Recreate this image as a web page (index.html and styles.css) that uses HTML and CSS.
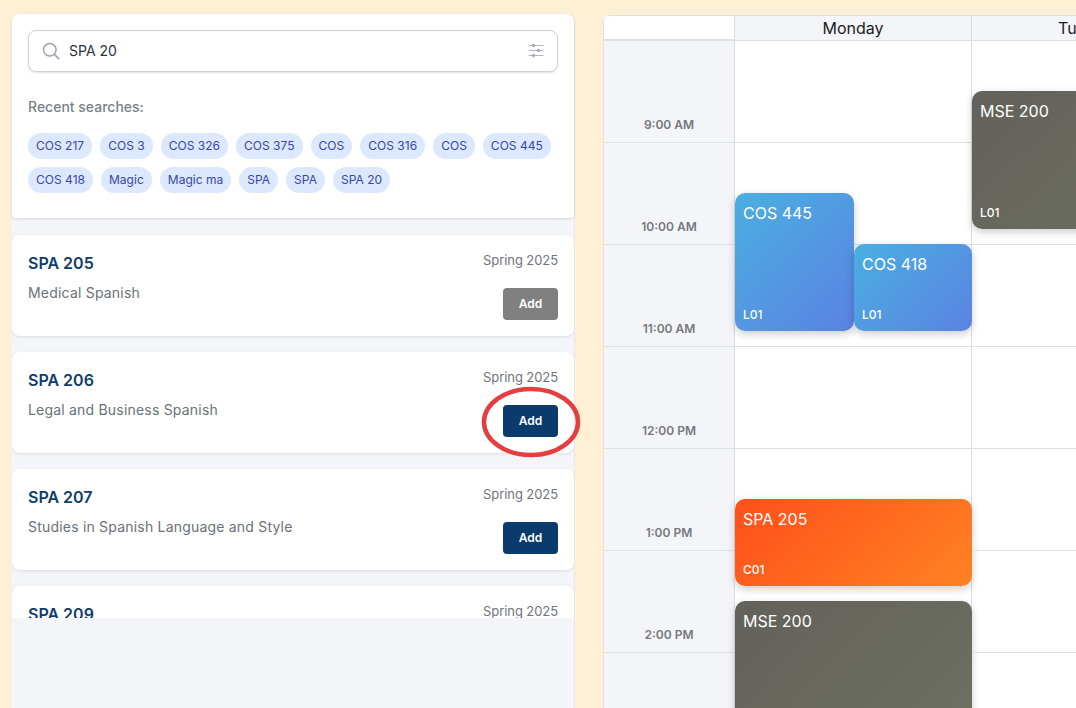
FILE: index.html
```html
<!DOCTYPE html>
<html lang="en">
<head>
    <meta charset="UTF-8">
    <title>Course Schedule</title>
    <link rel="stylesheet" href="styles.css">
</head>
<body>
    <div class="page">
        <div class="sidebar">
            <div class="search-card">
                <div class="search-box">
                    <svg class="search-icon" width="18" height="18" viewBox="0 0 18 18" fill="none" stroke="#9ca3af" stroke-width="1.5" stroke-linecap="round">
                        <circle cx="7.8" cy="7.8" r="6.3"/>
                        <path d="M12.4 12.4L16.6 16.6"/>
                    </svg>
                    <span class="search-text">SPA 20</span>
                    <svg class="filter-icon" width="16" height="16" viewBox="0 0 16 16" fill="#a9adb6" stroke="#b4b7bf">
                        <path d="M0.5 2.5H15.5M0.5 7.5H15.5M0.5 12.5H15.5" stroke-width="1.2"/>
                        <circle cx="5.5" cy="2.5" r="1.7" stroke="none"/>
                        <circle cx="10.5" cy="7.5" r="1.7" stroke="none"/>
                        <circle cx="5.5" cy="12.5" r="1.7" stroke="none"/>
                    </svg>
                </div>
                <div class="recent-label">Recent searches:</div>
                <div class="chips">
                    <span class="chip">COS 217</span>
                    <span class="chip">COS 3</span>
                    <span class="chip">COS 326</span>
                    <span class="chip">COS 375</span>
                    <span class="chip">COS</span>
                    <span class="chip">COS 316</span>
                    <span class="chip">COS</span>
                    <span class="chip">COS 445</span>
                    <span class="chip">COS 418</span>
                    <span class="chip">Magic</span>
                    <span class="chip">Magic ma</span>
                    <span class="chip">SPA</span>
                    <span class="chip">SPA</span>
                    <span class="chip">SPA 20</span>
                </div>
            </div>
            <div class="results">
                <div class="course-card">
                    <div class="course-info">
                        <div class="course-code">SPA 205</div>
                        <div class="course-title">Medical Spanish</div>
                    </div>
                    <div class="course-side">
                        <div class="course-term">Spring 2025</div>
                        <button class="add-btn added">Add</button>
                    </div>
                </div>
                <div class="course-card">
                    <div class="course-info">
                        <div class="course-code">SPA 206</div>
                        <div class="course-title">Legal and Business Spanish</div>
                    </div>
                    <div class="course-side">
                        <div class="course-term">Spring 2025</div>
                        <button class="add-btn">Add</button>
                    </div>
                </div>
                <div class="course-card">
                    <div class="course-info">
                        <div class="course-code">SPA 207</div>
                        <div class="course-title">Studies in Spanish Language and Style</div>
                    </div>
                    <div class="course-side">
                        <div class="course-term">Spring 2025</div>
                        <button class="add-btn">Add</button>
                    </div>
                </div>
                <div class="course-card">
                    <div class="course-info">
                        <div class="course-code">SPA 209</div>
                        <div class="course-title">Spanish for Heritage Speakers</div>
                    </div>
                    <div class="course-side">
                        <div class="course-term">Spring 2025</div>
                        <button class="add-btn">Add</button>
                    </div>
                </div>
            </div>
        </div>

        <div class="calendar">
            <div class="time-col">
                <div class="corner"></div>
                <div class="time-cell"><span>9:00 AM</span></div>
                <div class="time-cell"><span>10:00 AM</span></div>
                <div class="time-cell"><span>11:00 AM</span></div>
                <div class="time-cell"><span>12:00 PM</span></div>
                <div class="time-cell"><span>1:00 PM</span></div>
                <div class="time-cell"><span>2:00 PM</span></div>
                <div class="time-cell"><span>3:00 PM</span></div>
            </div>
            <div class="day-col">
                <div class="day-head">Monday</div>
                <div class="day-body">
                    <div class="hour"></div><div class="hour"></div><div class="hour"></div>
                    <div class="hour"></div><div class="hour"></div><div class="hour"></div><div class="hour"></div>
                    <div class="event blue" style="top:152px;height:138px;left:0;width:119px">
                        <div class="event-code">COS 445</div>
                        <div class="event-section">L01</div>
                    </div>
                    <div class="event blue" style="top:203px;height:87px;left:119px;width:118px">
                        <div class="event-code">COS 418</div>
                        <div class="event-section">L01</div>
                    </div>
                    <div class="event orange" style="top:458px;height:87px;left:0;width:237px">
                        <div class="event-code">SPA 205</div>
                        <div class="event-section">C01</div>
                    </div>
                    <div class="event gray" style="top:560px;height:138px;left:0;width:237px">
                        <div class="event-code">MSE 200</div>
                        <div class="event-section">L01</div>
                    </div>
                </div>
            </div>
            <div class="day-col">
                <div class="day-head">Tuesday</div>
                <div class="day-body">
                    <div class="hour"></div><div class="hour"></div><div class="hour"></div>
                    <div class="hour"></div><div class="hour"></div><div class="hour"></div><div class="hour"></div>
                    <div class="event gray" style="top:50px;height:138px;left:0;width:237px">
                        <div class="event-code">MSE 200</div>
                        <div class="event-section">L01</div>
                    </div>
                </div>
            </div>
        </div>

        <svg class="highlight" width="102" height="74" viewBox="0 0 102 74" fill="none">
            <ellipse cx="51" cy="37" rx="47" ry="33" stroke="#e53e41" stroke-width="4.5"/>
        </svg>
    </div>
</body>
</html>
```

FILE: styles.css
```css
html, body {
    margin: 0;
    padding: 0;
    height: 100%;
    overflow: hidden;
}
body {
    font-family: Inter, "Liberation Sans", sans-serif;
    background-color: #ffefd5;
}
.page {
    position: relative;
    display: flex;
    height: 708px;
    overflow: hidden;
    padding: 14px 0 0 12px;
    box-sizing: border-box;
}

/* left side */
.sidebar {
    flex: 0 0 563px;
    width: 563px;
    height: 700px;
    background-color: #f4f5f9;
    border-right: 1px solid #e6e7ec;
    border-radius: 8px 8px 0 0;
    box-sizing: border-box;
}
.search-card {
    height: 204px;
    padding: 16px;
    box-sizing: border-box;
    background-color: #fff;
    border-radius: 8px 8px 4px 4px;
    box-shadow: 0 1px 3px rgba(0, 0, 0, 0.12);
}
.search-box {
    display: flex;
    align-items: center;
    height: 42px;
    padding: 0 13px 0 13px;
    box-sizing: border-box;
    border: 1px solid #cfd0da;
    border-radius: 8px;
    box-shadow: 0 1px 2px rgba(0, 0, 0, 0.12);
}
.search-text {
    flex: 1;
    margin-left: 9px;
    font-size: 14px;
    line-height: 40px;
    margin-top: -1px;
    color: #2d3340;
}
.recent-label {
    margin-top: 26px;
    font-size: 14px;
    font-weight: 500;
    line-height: 18px;
    color: #7a7f87;
}
.chips {
    display: flex;
    flex-wrap: wrap;
    gap: 8px;
    margin-top: 17px;
}
.chip {
    height: 26px;
    padding: 0 8px;
    line-height: 26px;
    font-size: 12px;
    letter-spacing: 0.02px;
    color: #3a46a8;
    background-color: #dbe8fe;
    border-radius: 13px;
}
.results {
    height: 400px;
    overflow: hidden;
    padding-top: 17px;
    box-sizing: border-box;
    display: flex;
    flex-direction: column;
    gap: 16px;
}
.course-card {
    flex: 0 0 101px;
    display: flex;
    justify-content: space-between;
    padding: 16px;
    box-sizing: border-box;
    background-color: #fff;
    border-radius: 8px;
    box-shadow: 0 1px 3px rgba(0, 0, 0, 0.1);
}
.course-code {
    margin-top: 2px;
    font-size: 16px;
    font-weight: 600;
    line-height: 20px;
    color: #0f3d6b;
}
.course-title {
    margin-top: 10px;
    font-size: 14px;
    letter-spacing: 0.2px;
    line-height: 20px;
    color: #6b7178;
}
.course-side {
    display: flex;
    flex-direction: column;
    align-items: flex-end;
}
.course-term {
    font-size: 13px;
    letter-spacing: -0.08px;
    line-height: 18px;
    color: #6f747c;
}
.add-btn {
    width: 55px;
    height: 32px;
    margin-top: 19px;
    padding: 0 0 2px;
    border: none;
    border-radius: 4px;
    font-family: inherit;
    font-size: 12px;
    font-weight: 600;
    color: #fff;
    background-color: #0a3b6c;
}
.add-btn.added {
    background-color: #808080;
}
.highlight {
    position: absolute;
    left: 480px;
    top: 385px;
}

/* calendar */
.calendar {
    flex: 0 0 auto;
    display: flex;
    margin: 1px 0 0 28px;
    height: 760px;
    background-color: #fff;
    border-left: 1px solid #e0e0e0;
    border-top: 1px solid #e0e0e0;
    border-top-left-radius: 8px;
}
.time-col {
    width: 131px;
    box-sizing: border-box;
    background-color: #f4f5f9;
    border-right: 1px solid #dcdcdc;
}
.corner {
    height: 23px;
    background-color: #fff;
    border-bottom: 2px solid #e0e0e0;
    border-top-left-radius: 8px;
}
.time-cell {
    display: flex;
    align-items: flex-end;
    justify-content: center;
    height: 102px;
    box-sizing: border-box;
    padding-bottom: 9px;
    border-bottom: 1px solid #e0e0e0;
    font-size: 12px;
    font-weight: 600;
    line-height: 16px;
    color: #75787d;
}
.day-col {
    width: 237px;
}
.day-head {
    height: 24px;
    line-height: 25px;
    text-align: center;
    font-size: 16px;
    color: #1a1c22;
    background-color: #f4f5f9;
    border-right: 1px solid #dcdcdc;
    border-bottom: 1px solid #e0e0e0;
}
.day-body {
    position: relative;
}
.hour {
    height: 102px;
    box-sizing: border-box;
    border-right: 1px solid #dcdcdc;
    border-bottom: 1px solid #e0e0e0;
}
.event {
    position: absolute;
    display: flex;
    flex-direction: column;
    justify-content: space-between;
    padding: 9px 8px 8px;
    box-sizing: border-box;
    color: #fff;
    border-radius: 10px;
    box-shadow: 0 3px 8px rgba(0, 0, 0, 0.2);
}
.event.blue {
    background: linear-gradient(135deg, #4aafe1, #5b82e2);
}
.event.orange {
    background: linear-gradient(135deg, #ff4f1a, #ff8224);
}
.event.gray {
    background: linear-gradient(135deg, #62615b, #6e7062);
}
.event-code {
    font-size: 16px;
    line-height: 22px;
}
.event-section {
    font-size: 12px;
    font-weight: 500;
    line-height: 16px;
}
```
